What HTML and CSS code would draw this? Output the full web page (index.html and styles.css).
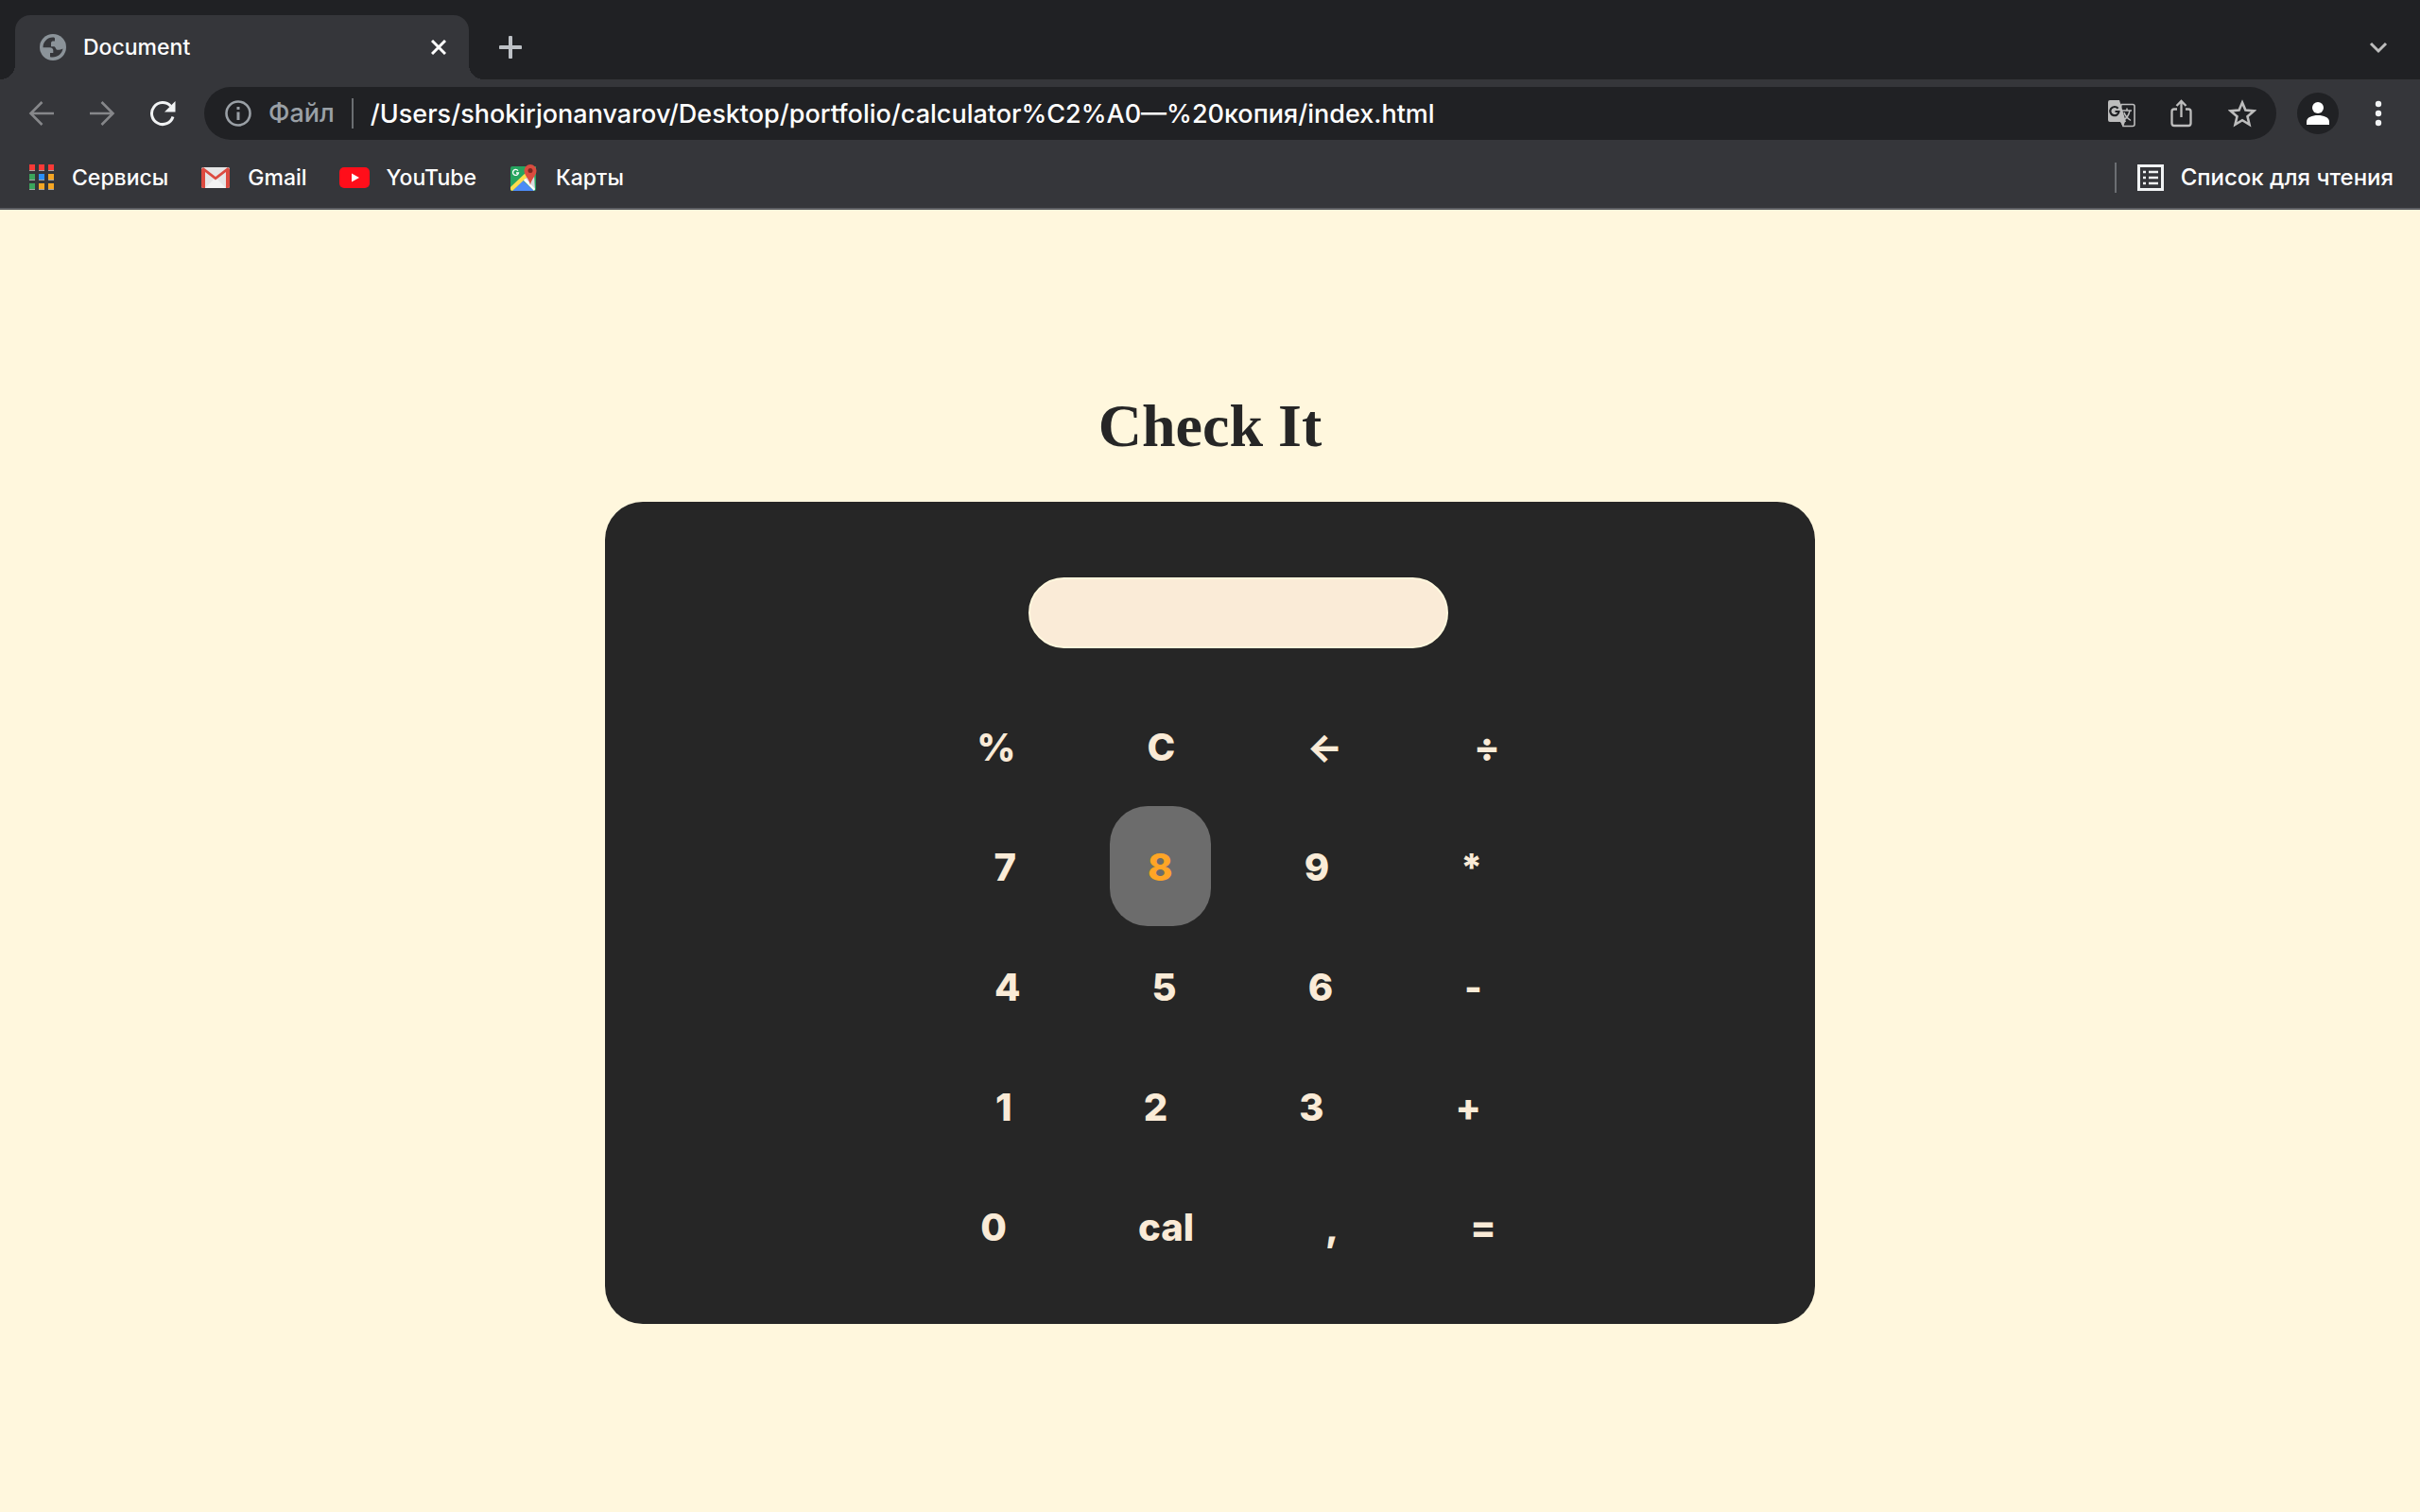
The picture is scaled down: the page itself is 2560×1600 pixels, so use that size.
FILE: index.html
```html
<!DOCTYPE html>
<html lang="ru">
<head>
<meta charset="utf-8">
<meta name="viewport" content="width=device-width, initial-scale=1">
<title>Document</title>
<link rel="stylesheet" href="styles.css">
</head>
<body>
<header class="browser">
  <div class="tab-strip">
    <div class="tab">
      <svg class="tab-icon" viewBox="0 0 28 28" aria-hidden="true"><circle cx="14" cy="14" r="14" fill="#8b9399"/><path d="M14 3.500C8 3.500 3.500 8.300 3.500 14.200H10.500C13.200 14.200 14.300 15.800 14.300 17.600V20H11V24.200C17.500 25.800 23.800 21.500 24.500 15.500C23 16.500 21 16.800 19.200 16.800C16.800 16.800 17.200 14 15.500 13.200H12V9.500C12 8 13 7.400 14.800 7.400H16V4.600C16 4 15 3.500 14 3.500Z" fill="#35363a"/></svg>
      <span class="tab-title">Document</span>
      <button class="icon-button tab-close" aria-label="Закрыть"><svg width="16" height="16" viewBox="0 0 16 16"><path d="M1 1L15 15M15 1L1 15" stroke="#fff" stroke-width="3"/></svg></button>
    </div>
    <button class="icon-button new-tab" aria-label="Новая вкладка"><svg width="24" height="24" viewBox="0 0 24 24"><path d="M12 1.500V22.500M1.500 12H22.500" stroke="#bdc1c6" stroke-width="4" stroke-linecap="round"/></svg></button>
    <button class="icon-button tab-search" aria-label="Поиск вкладок"><svg width="20" height="14" viewBox="0 0 20 14"><path d="M2 3L10 11L18 3" fill="none" stroke="#bdbdbd" stroke-width="3"/></svg></button>
  </div>

  <div class="toolbar">
    <nav class="nav-buttons">
      <button class="icon-button" aria-label="Назад"><svg width="28" height="28" viewBox="0 0 28 28"><path d="M14.500 2L2.500 14L14.500 26M2.500 14H27" fill="none" stroke="#86878a" stroke-width="2.600"/></svg></button>
      <button class="icon-button" aria-label="Вперёд"><svg width="28" height="28" viewBox="0 0 28 28"><path d="M13.500 2L25.500 14L13.500 26M25.500 14H1" fill="none" stroke="#86878a" stroke-width="2.600"/></svg></button>
      <button class="icon-button" aria-label="Обновить"><svg width="28" height="28" viewBox="0 0 28 28"><path d="M25 17.500A11.500 11.500 0 1 1 22.500 6.300" fill="none" stroke="#f1f3f4" stroke-width="3"/><path d="M27.500 1V12.500H16Z" fill="#f1f3f4"/></svg></button>
    </nav>
    <div class="address-bar">
      <svg class="info-icon" viewBox="0 0 28 28" aria-hidden="true"><circle cx="14" cy="14" r="12.500" fill="none" stroke="#9aa0a6" stroke-width="2.600"/><path d="M14 12.500V21M14 7V10" stroke="#9aa0a6" stroke-width="3"/></svg>
      <label class="address-label" for="address">Файл</label>
      <input class="address-input" id="address" type="text" value="/Users/shokirjonanvarov/Desktop/portfolio/calculator%C2%A0—%20копия/index.html">
      <div class="address-actions">
        <button class="icon-button" aria-label="Перевести"><svg width="30" height="30" viewBox="0 0 30 30"><path d="M15 5.500H27A2 2 0 0 1 29 7.500V26.500A2 2 0 0 1 27 28.500H17L13 18Z" fill="none" stroke="#bdbdbd" stroke-width="1.600"/><path d="M3 1H13L20 24H3A2 2 0 0 1 1 22V3A2 2 0 0 1 3 1ZM14 24H19L17 29Z" fill="#bdbdbd"/><path d="M11.500 9.700A4.600 4.600 0 1 0 12.500 13H8.500" fill="none" stroke="#202124" stroke-width="2.200"/><path d="M16 12H26M21 9.500V12M24 12C23 17 20 20.500 17.500 22M18 14C19 17.500 22 20.500 25 22.500" fill="none" stroke="#bdbdbd" stroke-width="1.500"/></svg></button>
        <button class="icon-button" aria-label="Поделиться"><svg width="30" height="30" viewBox="0 0 30 30"><path d="M10 10.500H7A2.500 2.500 0 0 0 4.500 13V25.500A2.500 2.500 0 0 0 7 28H22A2.500 2.500 0 0 0 24.500 25.500V13A2.500 2.500 0 0 0 22 10.500H19M14.500 19V2.500M9.500 7L14.500 2L19.500 7" fill="none" stroke="#bdbdbd" stroke-width="2.300"/></svg></button>
        <button class="icon-button" aria-label="Добавить в закладки"><svg width="30" height="30" viewBox="0 0 30 30"><path d="M15 3.500L18.400 11.600L27.200 12.400L20.500 18.200L22.500 26.800L15 22.200L7.500 26.800L9.500 18.200L2.800 12.400L11.600 11.600Z" fill="none" stroke="#bdbdbd" stroke-width="2.600"/></svg></button>
      </div>
    </div>
    <button class="icon-button profile" aria-label="Профиль"><svg width="24" height="24" viewBox="0 0 24 24" fill="#fff"><circle cx="12" cy="6" r="6"/><path d="M0 24V21C0 16 6 14 12 14S24 16 24 21V24Z"/></svg></button>
    <button class="icon-button" aria-label="Меню"><svg width="28" height="28" viewBox="0 0 28 28" fill="#f1f3f4"><circle cx="14" cy="4" r="3.200"/><circle cx="14" cy="14" r="3.200"/><circle cx="14" cy="24" r="3.200"/></svg></button>
  </div>

  <nav class="bookmarks">
    <a class="bookmark" href="#"><svg width="28" height="28" viewBox="0 0 28 28"><path d="M1 6h6v1H1zM11 6h6v1h-6zM21 6h6v1h-6zM1 16h6v1H1zM11 16h6v1h-6zM21 16h6v1h-6zM1 26h6v1H1zM11 26h6v1h-6zM21 26h6v1h-6z" fill="#a5a5a5"/><path d="M1 0h6v6H1zM11 0h6v6h-6zM21 0h6v6h-6z" fill="#f93a37"/><path d="M1 10h6v6H1zM1 20h6v6H1z" fill="#3ba55c"/><path d="M11 10h6v6h-6z" fill="#2a8ff7"/><path d="M21 10h6v6h-6zM11 20h6v6h-6zM21 20h6v6h-6z" fill="#f5a623"/></svg><span>Сервисы</span></a>
    <a class="bookmark" href="#"><svg width="32" height="28" viewBox="0 0 32 28"><rect x="1" y="3" width="30" height="22" rx="2" fill="#e6e6e6"/><path d="M5 25L16 14L27 25Z" fill="#f3f3f3"/><path d="M5 8V25H3A2 2 0 0 1 1 23V5L3 3L16 13L29 3L31 5V23A2 2 0 0 1 29 25H27V8L16 16.500Z" fill="#dc4b40"/></svg><span>Gmail</span></a>
    <a class="bookmark" href="#"><svg width="32" height="28" viewBox="0 0 32 28"><rect x="0" y="3" width="32" height="22" rx="5" fill="#ff0e1a"/><path d="M13 9.500V18.500L21 14Z" fill="#fff"/></svg><span>YouTube</span></a>
    <a class="bookmark" href="#"><svg width="32" height="28" viewBox="0 0 32 28"><path d="M4 2H29V26A2 2 0 0 1 27 28H4A2 2 0 0 1 2 26V4A2 2 0 0 1 4 2Z" fill="#26a45f"/><path d="M15 16L27 10L28 27Z" fill="#dadce0"/><path d="M15 17L27 28H4Z" fill="#4c8bf5"/><path d="M2 24L19 8L21 12L4 28A2 2 0 0 1 2 26Z" fill="#fddc4e"/><path d="M16 17L18 15L28 26L27 28Z" fill="#fff"/><path d="M23 22C22 15 16.500 12 16.500 6.500A6.500 6.500 0 0 1 29.500 6.500C29.500 12 24 15 23 22Z" fill="#da4c3f"/><circle cx="23" cy="6.500" r="2.500" fill="#7b2720"/><path d="M10 6.700A3 3 0 1 0 10.500 9H8" fill="none" stroke="#fff" stroke-width="1.300"/></svg><span>Карты</span></a>
    <a class="bookmark reading-list" href="#"><svg width="28" height="28" viewBox="0 0 28 28"><rect x="1.500" y="1.500" width="25" height="25" fill="none" stroke="#f1f3f4" stroke-width="3"/><path d="M6 8H9M6 14H9M6 20H9M12 8H22M12 14H22M12 20H22" stroke="#f1f3f4" stroke-width="2.500"/></svg><span>Список для чтения</span></a>
  </nav>
</header>

<main class="page">
  <h1 class="title">Check It</h1>
  <section class="calculator" aria-label="Calculator">
    <input class="display" type="text" aria-label="Result">
    <div class="keys">
      <div class="key-row"><button class="key">%</button><button class="key">C</button><button class="key">←</button><button class="key">÷</button></div>
      <div class="key-row"><button class="key">7</button><button class="key key-active">8</button><button class="key">9</button><button class="key">*</button></div>
      <div class="key-row"><button class="key">4</button><button class="key">5</button><button class="key">6</button><button class="key">-</button></div>
      <div class="key-row"><button class="key">1</button><button class="key">2</button><button class="key">3</button><button class="key">+</button></div>
      <div class="key-row"><button class="key">0</button><button class="key">cal</button><button class="key">,</button><button class="key">=</button></div>
    </div>
  </section>
</main>
</body>
</html>
```
FILE: styles.css
```css
* {
  box-sizing: border-box;
}

body {
  margin: 0;
  min-height: 100vh;
  background: #fff7dd;
  font-family: Inter, "Liberation Sans", sans-serif;
}

button,
input {
  margin: 0;
  padding: 0;
  border: 0;
  background: none;
  font: inherit;
  outline: none;
}

svg {
  display: block;
  flex: none;
}

/* Browser frame */
.browser {
  background: #35363a;
  border-bottom: 2px solid #5c5e62;
  color: #fff;
  font-size: 23px;
  font-weight: 500;
}

.icon-button {
  display: flex;
  flex: none;
  align-items: center;
  justify-content: center;
}

.tab-strip {
  display: flex;
  align-items: center;
  height: 84px;
  padding: 16px 34px 0 16px;
  background: #202124;
}

.tab {
  position: relative;
  display: flex;
  align-items: center;
  gap: 18px;
  width: 480px;
  height: 68px;
  padding: 0 24px 0 26px;
  border-radius: 16px 16px 0 0;
  background: #35363a;
}

.tab::before,
.tab::after {
  content: "";
  position: absolute;
  bottom: 0;
  width: 16px;
  height: 16px;
}

.tab::before {
  right: 100%;
  background: radial-gradient(circle at 0 0, #202124 16px, #35363a 16px);
}

.tab::after {
  left: 100%;
  background: radial-gradient(circle at 100% 0, #202124 16px, #35363a 16px);
}

.tab-icon,
.info-icon {
  width: 28px;
  height: 28px;
}

.tab-title {
  flex: 1;
}

.new-tab {
  margin: 0 auto 0 32px;
}

.toolbar {
  display: flex;
  align-items: center;
  height: 72px;
  padding: 0 30px;
}

.nav-buttons {
  display: flex;
  gap: 36px;
  margin-right: 30px;
}

.address-bar {
  display: flex;
  flex: 1;
  align-items: center;
  height: 56px;
  padding: 0 21px 0 22px;
  border-radius: 28px;
  background: #202124;
  font-size: 27px;
}

.address-label {
  margin-left: 18px;
  padding-right: 18px;
  border-right: 2px solid #6b6e72;
  color: #9aa0a6;
  line-height: 32px;
}

.address-input {
  flex: 1;
  min-width: 0;
  height: 56px;
  padding-left: 18px;
  color: #fff;
}

.address-actions {
  display: flex;
  gap: 34px;
}

.profile {
  width: 44px;
  height: 44px;
  margin: 0 28px 0 22px;
  border-radius: 50%;
  background: #202124;
}

.bookmarks {
  display: flex;
  align-items: center;
  gap: 34px;
  height: 64px;
  padding: 0 28px 0 30px;
}

.bookmark {
  display: flex;
  align-items: center;
  gap: 18px;
  color: #fff;
  line-height: 32px;
  text-decoration: none;
}

.reading-list {
  margin-left: auto;
  padding-left: 22px;
  border-left: 2px solid #6b6e72;
  font-size: 24px;
}

/* Page */
.page {
  display: flex;
  flex-direction: column;
  align-items: center;
  padding-top: 190px;
}

.title {
  margin: 0 0 42px;
  color: #262626;
  font: bold 64px/77px "Liberation Serif", serif;
}

.calculator {
  display: flex;
  flex-direction: column;
  align-items: center;
  gap: 40px;
  width: 50%;
  padding: 80px 0 40px 60px;
  border-radius: 40px;
  background: #262626;
}

.display {
  width: 444px;
  height: 75px;
  padding: 0 24px;
  border: 2px solid #fff7dd;
  border-radius: 40px;
  background: #faebd7;
  font-size: 40px;
}

.key-row {
  display: flex;
  justify-content: center;
  gap: 59px;
}

.key {
  padding: 41px 40px 39px;
  border-radius: 40px;
  color: #faebd7;
  font-size: 40px;
  font-weight: 800;
  line-height: 47px;
}

.key-active {
  background: #6c6c6c;
  color: #ffa526;
}
```
